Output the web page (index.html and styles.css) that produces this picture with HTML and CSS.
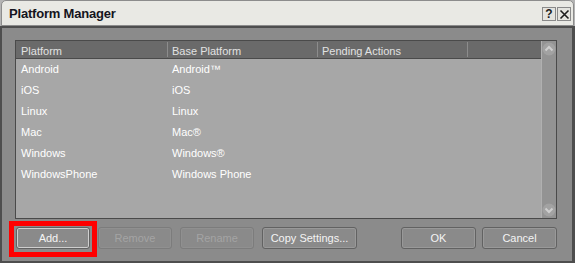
FILE: index.html
```html
<!DOCTYPE html>
<html lang="en">
<head>
    <meta charset="UTF-8">
    <title>Platform Manager</title>
    <link rel="stylesheet" href="styles.css">
</head>
<body>
    <div class="window">
        <div class="titlebar">
            <span class="title">Platform Manager</span>
            <div class="title-buttons">
                <span class="tbtn">?</span>
                <span class="tbtn">
                    <svg width="11" height="11" viewBox="0 0 11 11">
                        <path d="M1.5 1.5 L9.5 9.5 M9.5 1.5 L1.5 9.5" stroke="#1c1c1c" stroke-width="1.6" fill="none"/>
                    </svg>
                </span>
            </div>
        </div>
        <div class="content">
            <div class="list">
                <div class="table">
                    <div class="thead">
                        <div class="th">Platform</div>
                        <div class="th">Base Platform</div>
                        <div class="th">Pending Actions</div>
                        <div class="th th-last"></div>
                    </div>
                    <div class="row"><div class="td">Android</div><div class="td">Android™</div></div>
                    <div class="row"><div class="td">iOS</div><div class="td">iOS</div></div>
                    <div class="row"><div class="td">Linux</div><div class="td">Linux</div></div>
                    <div class="row"><div class="td">Mac</div><div class="td">Mac®</div></div>
                    <div class="row"><div class="td">Windows</div><div class="td">Windows®</div></div>
                    <div class="row"><div class="td">WindowsPhone</div><div class="td">Windows Phone</div></div>
                </div>
                <div class="scrollbar">
                    <svg class="arrow" width="14" height="14" viewBox="0 0 14 14">
                        <circle cx="7" cy="7" r="6.5" fill="#a2a2a2"/>
                        <path d="M3.5 8.5 L7 5 L10.5 8.5" stroke="#cfcfcf" stroke-width="2" fill="none"/>
                    </svg>
                    <div class="track"></div>
                    <svg class="arrow" width="14" height="14" viewBox="0 0 14 14">
                        <circle cx="7" cy="7" r="6.5" fill="#a2a2a2"/>
                        <path d="M3.5 5.5 L7 9 L10.5 5.5" stroke="#cfcfcf" stroke-width="2" fill="none"/>
                    </svg>
                </div>
            </div>
            <div class="buttons">
                <div class="group">
                    <button class="btn focused">Add...</button>
                    <button class="btn" disabled>Remove</button>
                    <button class="btn" disabled>Rename</button>
                    <button class="btn wide">Copy Settings...</button>
                </div>
                <div class="group right">
                    <button class="btn ok">OK</button>
                    <button class="btn ok">Cancel</button>
                </div>
            </div>
        </div>
        <div class="highlight"></div>
    </div>
</body>
</html>
```

FILE: styles.css
```css
body {
    margin: 0;
    background: #b4b4b4;
    font-family: "Liberation Sans", Arial, sans-serif;
    font-size: 11px;
}

.window {
    position: relative;
    width: 575px;
    height: 263px;
    display: flex;
    flex-direction: column;
}

.titlebar {
    height: 24px;
    margin: 0 1px;
    background: #e9e9e4;
    border: 1px solid #8c8c8c;
    border-radius: 5px 5px 0 0;
    display: flex;
    align-items: center;
    justify-content: space-between;
    padding: 0 2px 0 7px;
}

.title {
    font-size: 13px;
    font-weight: bold;
    letter-spacing: -0.2px;
    color: #141420;
    padding-top: 1px;
}

.title-buttons {
    display: flex;
    gap: 1px;
    padding-top: 2px;
}

.tbtn {
    width: 12px;
    height: 12px;
    border: 1px solid #8a8a8a;
    background: #e4e4df;
    display: flex;
    align-items: center;
    justify-content: center;
    font-size: 12px;
    font-weight: bold;
    color: #1c1c1c;
    line-height: 12px;
}

.content {
    flex: 1;
    background: #8b8b8b;
    border: 2px solid #4e4e4e;
    border-right-width: 3px;
    padding: 12px 15px 0 13px;
    display: flex;
    flex-direction: column;
}

.list {
    height: 177px;
    border: 1px solid #4a4a4a;
    background: #a7a7a7;
    display: flex;
}

.table {
    flex: 1;
}

.thead {
    display: flex;
    height: 17px;
    background: #6a6a6a;
    border-bottom: 1px solid #4a4a4a;
    color: #e2e2e2;
}

.th {
    width: 150px;
    padding: 2px 0 0 4px;
    line-height: 15px;
    box-sizing: border-box;
    border-right: 1px solid #8c8c8c;
    margin: 1px 0;
}

.th:first-child {
    width: 152px;
    padding-left: 5px;
}

.th-last {
    width: 72px;
    border-right: none;
}

.row {
    display: flex;
    height: 21px;
    line-height: 21px;
    color: #ffffff;
}

.td {
    width: 150px;
    padding-left: 4px;
    box-sizing: border-box;
}

.td:first-child {
    width: 152px;
    padding-left: 5px;
}

.scrollbar {
    width: 14px;
    background: #939393;
    border-left: 1px solid #b0b0b0;
    display: flex;
    flex-direction: column;
}

.arrow {
    display: block;
    margin: 1px 0;
}

.track {
    flex: 1;
}

.buttons {
    display: flex;
    justify-content: space-between;
    margin-top: 8px;
    padding-left: 1px;
}

.group {
    display: flex;
    gap: 8px;
}

.group.right {
    gap: 6px;
}

.btn {
    width: 74px;
    height: 22px;
    padding: 0;
    font-family: "Liberation Sans", Arial, sans-serif;
    font-size: 11px;
    color: #f4f4f4;
    background: #8a8a8a;
    border: 1px solid #626262;
    border-radius: 3px;
    box-shadow: inset 0 0 0 1px #999999;
}

.btn:disabled {
    color: #a4a4a4;
    border-color: #7c7c7c;
    box-shadow: inset 0 0 0 1px #909090;
}

.btn.focused {
    box-shadow: inset 0 0 0 1px #cfcfcf;
}

.btn.wide {
    width: 95px;
}

.btn.ok {
    width: 75px;
}

.highlight {
    position: absolute;
    left: 9px;
    top: 221px;
    width: 78px;
    height: 26px;
    border: 5px solid #ff0000;
}
```
